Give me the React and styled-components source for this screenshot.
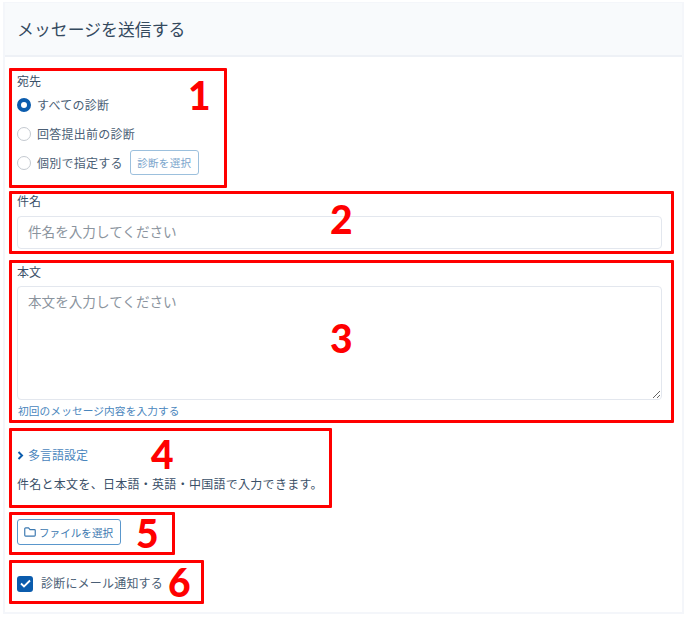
import styled, { createGlobalStyle } from "styled-components";

const GlobalStyle = createGlobalStyle`
  html, body {
    margin: 0;
    padding: 0;
    background: #fff;
  }
  body {
    font-family: "Noto Sans CJK JP", "Noto Sans", sans-serif;
    color: #3a5068;
  }
  * {
    box-sizing: border-box;
  }
`;

const Card = styled.div`
  width: 681px;
  height: 612px;
  margin: 2px 0 0 3px;
  border: 2px solid #f4f6fa;
  border-top-width: 1px;
  background: #fff;
`;

const Header = styled.div`
  height: 54px;
  padding-left: 12px;
  display: flex;
  align-items: center;
  background: #f8fafc;
  border-bottom: 2px solid #eef1f6;
  font-size: 16.8px;
  letter-spacing: 0.1px;
  color: #34495e;
`;

const Body = styled.div`
  padding: 11px 0 0 4px;
  display: flex;
  flex-direction: column;
`;

// red annotation frames around each group
const Frame = styled.section`
  position: relative;
  width: ${(p) => p.$w}px;
  height: ${(p) => p.$h}px;
  margin-bottom: ${(p) => p.$mb || 0}px;
  border: 3px solid #f00;
  border-radius: 1px;
  padding: ${(p) => p.$pt || 0}px 5px 0;
`;

const Num = styled.span`
  position: absolute;
  left: ${(p) => p.$x}px;
  top: ${(p) => p.$y}px;
  font-family: "Lato", "Noto Sans", sans-serif;
  font-size: 39px;
  font-weight: 900;
  line-height: 1;
  color: #f00;
`;

const Label = styled.div`
  font-size: 12px;
  line-height: ${(p) => p.$lh || 15}px;
  color: #3a5068;
`;

const RadioGroup = styled.div`
  margin-top: 2px;
`;

const RadioRow = styled.div`
  display: flex;
  align-items: center;
  height: 29px;
  font-size: 12px;
  letter-spacing: 0.25px;
  color: #4a5e75;
`;

const Radio = styled.span`
  width: 14px;
  height: 14px;
  margin-right: 6px;
  border-radius: 50%;
  background: #fff;
  border: ${(p) => (p.$on ? "4px solid #0b5cad" : "1px solid #c4c9d0")};
`;

const SelectButton = styled.span`
  display: inline-flex;
  align-items: center;
  justify-content: center;
  width: 69px;
  height: 25px;
  margin-left: 7px;
  border: 1px solid #9cc0dd;
  border-radius: 3px;
  font-size: 10.6px;
  color: #7aa5cc;
`;

const Input = styled.input`
  display: block;
  width: 645px;
  height: 33px;
  margin-top: 9px;
  padding: 0 10px 3px;
  border: 1px solid #e3e7ee;
  border-radius: 4px;
  font: inherit;
  font-size: 13.6px;
  &::placeholder {
    color: #8b949e;
  }
`;

const TextArea = styled.textarea`
  display: block;
  width: 645px;
  height: 114px;
  margin-top: 7px;
  padding: 4px 10px;
  border: 1px solid #e3e7ee;
  border-radius: 4px;
  font: inherit;
  font-size: 13.6px;
  line-height: 20px;
  &::placeholder {
    color: #8b949e;
  }
`;

const Help = styled.div`
  margin: 3px 0 0 1px;
  font-size: 10.7px;
  letter-spacing: 0.1px;
  line-height: 15px;
  color: #4a86bd;
`;

const LangToggle = styled.div`
  display: flex;
  align-items: center;
  gap: 4px;
  margin-top: 15px;
  font-size: 12px;
  line-height: 18px;
  color: #4a86bd;
`;

const LangNote = styled.div`
  margin-top: 11px;
  font-size: 12px;
  letter-spacing: 0.28px;
  line-height: 18px;
  white-space: nowrap;
  color: #3a5068;
`;

const FileButton = styled.span`
  display: inline-flex;
  align-items: center;
  gap: 2px;
  width: 104px;
  height: 26px;
  padding-left: 5px;
  margin-top: 4px;
  border: 1px solid #5a97cc;
  border-radius: 3px;
  font-size: 10.6px;
  color: #3b78b0;
`;

const CheckRow = styled.div`
  display: flex;
  align-items: center;
  gap: 8px;
  height: 39px;
  font-size: 12px;
  letter-spacing: 0.2px;
  color: #4a5e75;
`;

const Check = styled.span`
  display: flex;
  align-items: center;
  justify-content: center;
  width: 16px;
  height: 16px;
  margin-top: 2px;
  border-radius: 3px;
  background: #0b5cad;
`;

export default function App() {
  return (
    <>
      <GlobalStyle />
      <Card>
        <Header>メッセージを送信する</Header>
        <Body>
          <Frame $w={218} $h={120} $mb={3} $pt={2}>
            <Label>宛先</Label>
            <RadioGroup>
              <RadioRow>
                <Radio $on />
                すべての診断
              </RadioRow>
              <RadioRow>
                <Radio />
                回答提出前の診断
              </RadioRow>
              <RadioRow>
                <Radio />
                個別で指定する
                <SelectButton>診断を選択</SelectButton>
              </RadioRow>
            </RadioGroup>
            <Num $x={176} $y={5}>1</Num>
          </Frame>

          <Frame $w={665} $h={63} $mb={6}>
            <Label $lh={13}>件名</Label>
            <Input placeholder="件名を入力してください" />
            <Num $x={318} $y={6}>2</Num>
          </Frame>

          <Frame $w={665} $h={163} $mb={5} $pt={1}>
            <Label>本文</Label>
            <TextArea placeholder="本文を入力してください" />
            <Help>初回のメッセージ内容を入力する</Help>
            <Num $x={318} $y={56}>3</Num>
          </Frame>

          <Frame $w={323} $h={80} $mb={4}>
            <LangToggle>
              <svg width="7" height="9" viewBox="0 0 7 9" fill="none">
                <path d="M1.5 1 L5 4.5 L1.5 8" stroke="#0b5cad" strokeWidth="2" />
              </svg>
              多言語設定
            </LangToggle>
            <LangNote>件名と本文を、日本語・英語・中国語で入力できます。</LangNote>
            <Num $x={139} $y={4}>4</Num>
          </Frame>

          <Frame $w={166} $h={43} $mb={5}>
            <FileButton>
              <svg width="14" height="14" viewBox="0 0 24 24" fill="none" stroke="#3b78b0" strokeWidth="2" strokeLinejoin="round">
                <path d="M3 6.5 a1.5 1.5 0 0 1 1.5 -1.5 h5 l2.5 3 h7.500 a1.500 1.500 0 0 1 1.500 1.500 v8 a1.500 1.500 0 0 1 -1.500 1.500 h-15 a1.500 1.500 0 0 1 -1.500 -1.500 z" />
              </svg>
              ファイルを選択
            </FileButton>
            <Num $x={124} $y={-1}>5</Num>
          </Frame>

          <Frame $w={195} $h={44}>
            <CheckRow>
              <Check>
                <svg width="11" height="9" viewBox="0 0 11 9" fill="none">
                  <path d="M1 4.500 L4 7.500 L10 1.500" stroke="#fff" strokeWidth="1.800" />
                </svg>
              </Check>
              診断にメール通知する
            </CheckRow>
            <Num $x={156} $y={0}>6</Num>
          </Frame>
        </Body>
      </Card>
    </>
  );
}
